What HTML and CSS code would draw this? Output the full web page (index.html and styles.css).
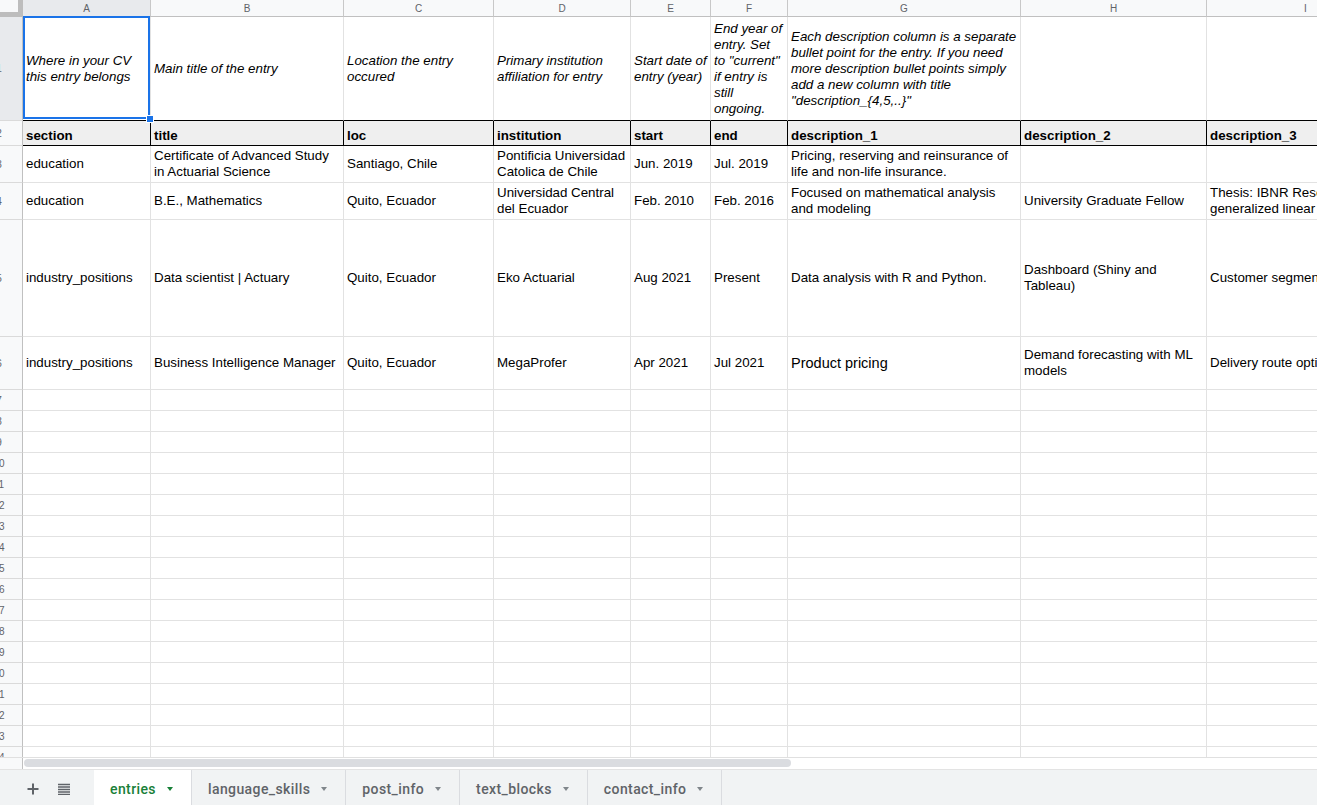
FILE: index.html
```html
<!DOCTYPE html>
<html lang="en">
<head>
<meta charset="utf-8">
<title>entries</title>
<link rel="stylesheet" href="styles.css">
</head>
<body>
<div class="sheet">
  <div class="viewport">
    <div class="grid">
      <div class="corner"></div>
      <div class="ch active">A</div>
      <div class="ch">B</div>
      <div class="ch">C</div>
      <div class="ch">D</div>
      <div class="ch">E</div>
      <div class="ch">F</div>
      <div class="ch">G</div>
      <div class="ch">H</div>
      <div class="ch">I</div>

      <div class="rh active">1</div>
      <div class="c note sel">Where in your CV this entry belongs<span class="handle"></span></div>
      <div class="c note">Main title of the entry</div>
      <div class="c note">Location the entry occured</div>
      <div class="c note">Primary institution affiliation for entry</div>
      <div class="c note">Start date of entry (year)</div>
      <div class="c note">End year of entry. Set to "current" if entry is still ongoing.</div>
      <div class="c note">Each description column is a separate bullet point for the entry. If you need more description bullet points simply add a new column with title "description_{4,5,..}"</div>
      <div class="c note"></div>
      <div class="c note"></div>

      <div class="rh">2</div>
      <div class="c fld">section</div>
      <div class="c fld">title</div>
      <div class="c fld">loc</div>
      <div class="c fld">institution</div>
      <div class="c fld">start</div>
      <div class="c fld">end</div>
      <div class="c fld">description_1</div>
      <div class="c fld">description_2</div>
      <div class="c fld">description_3</div>

      <div class="rh">3</div>
      <div class="c">education</div>
      <div class="c">Certificate of Advanced Study in Actuarial Science</div>
      <div class="c">Santiago, Chile</div>
      <div class="c">Pontificia Universidad Catolica de Chile</div>
      <div class="c">Jun. 2019</div>
      <div class="c">Jul. 2019</div>
      <div class="c">Pricing, reserving and reinsurance of life and non-life insurance.</div>
      <div class="c"></div>
      <div class="c"></div>

      <div class="rh">4</div>
      <div class="c">education</div>
      <div class="c">B.E., Mathematics</div>
      <div class="c">Quito, Ecuador</div>
      <div class="c">Universidad Central del Ecuador</div>
      <div class="c">Feb. 2010</div>
      <div class="c">Feb. 2016</div>
      <div class="c">Focused on mathematical analysis and modeling</div>
      <div class="c">University Graduate Fellow</div>
      <div class="c">Thesis: IBNR Reserving with generalized linear models</div>

      <div class="rh">5</div>
      <div class="c">industry_positions</div>
      <div class="c">Data scientist | Actuary</div>
      <div class="c">Quito, Ecuador</div>
      <div class="c">Eko Actuarial</div>
      <div class="c">Aug 2021</div>
      <div class="c">Present</div>
      <div class="c">Data analysis with R and Python.</div>
      <div class="c">Dashboard (Shiny and Tableau)</div>
      <div class="c">Customer segmentation</div>

      <div class="rh">6</div>
      <div class="c">industry_positions</div>
      <div class="c">Business Intelligence Manager</div>
      <div class="c">Quito, Ecuador</div>
      <div class="c">MegaProfer</div>
      <div class="c">Apr 2021</div>
      <div class="c">Jul 2021</div>
      <div class="c big">Product pricing</div>
      <div class="c">Demand forecasting with ML models</div>
      <div class="c">Delivery route optimization</div>

      <div class="rh">7</div><div class="c"></div><div class="c"></div><div class="c"></div><div class="c"></div><div class="c"></div><div class="c"></div><div class="c"></div><div class="c"></div><div class="c"></div>
      <div class="rh">8</div><div class="c"></div><div class="c"></div><div class="c"></div><div class="c"></div><div class="c"></div><div class="c"></div><div class="c"></div><div class="c"></div><div class="c"></div>
      <div class="rh">9</div><div class="c"></div><div class="c"></div><div class="c"></div><div class="c"></div><div class="c"></div><div class="c"></div><div class="c"></div><div class="c"></div><div class="c"></div>
      <div class="rh">10</div><div class="c"></div><div class="c"></div><div class="c"></div><div class="c"></div><div class="c"></div><div class="c"></div><div class="c"></div><div class="c"></div><div class="c"></div>
      <div class="rh">11</div><div class="c"></div><div class="c"></div><div class="c"></div><div class="c"></div><div class="c"></div><div class="c"></div><div class="c"></div><div class="c"></div><div class="c"></div>
      <div class="rh">12</div><div class="c"></div><div class="c"></div><div class="c"></div><div class="c"></div><div class="c"></div><div class="c"></div><div class="c"></div><div class="c"></div><div class="c"></div>
      <div class="rh">13</div><div class="c"></div><div class="c"></div><div class="c"></div><div class="c"></div><div class="c"></div><div class="c"></div><div class="c"></div><div class="c"></div><div class="c"></div>
      <div class="rh">14</div><div class="c"></div><div class="c"></div><div class="c"></div><div class="c"></div><div class="c"></div><div class="c"></div><div class="c"></div><div class="c"></div><div class="c"></div>
      <div class="rh">15</div><div class="c"></div><div class="c"></div><div class="c"></div><div class="c"></div><div class="c"></div><div class="c"></div><div class="c"></div><div class="c"></div><div class="c"></div>
      <div class="rh">16</div><div class="c"></div><div class="c"></div><div class="c"></div><div class="c"></div><div class="c"></div><div class="c"></div><div class="c"></div><div class="c"></div><div class="c"></div>
      <div class="rh">17</div><div class="c"></div><div class="c"></div><div class="c"></div><div class="c"></div><div class="c"></div><div class="c"></div><div class="c"></div><div class="c"></div><div class="c"></div>
      <div class="rh">18</div><div class="c"></div><div class="c"></div><div class="c"></div><div class="c"></div><div class="c"></div><div class="c"></div><div class="c"></div><div class="c"></div><div class="c"></div>
      <div class="rh">19</div><div class="c"></div><div class="c"></div><div class="c"></div><div class="c"></div><div class="c"></div><div class="c"></div><div class="c"></div><div class="c"></div><div class="c"></div>
      <div class="rh">20</div><div class="c"></div><div class="c"></div><div class="c"></div><div class="c"></div><div class="c"></div><div class="c"></div><div class="c"></div><div class="c"></div><div class="c"></div>
      <div class="rh">21</div><div class="c"></div><div class="c"></div><div class="c"></div><div class="c"></div><div class="c"></div><div class="c"></div><div class="c"></div><div class="c"></div><div class="c"></div>
      <div class="rh">22</div><div class="c"></div><div class="c"></div><div class="c"></div><div class="c"></div><div class="c"></div><div class="c"></div><div class="c"></div><div class="c"></div><div class="c"></div>
      <div class="rh">23</div><div class="c"></div><div class="c"></div><div class="c"></div><div class="c"></div><div class="c"></div><div class="c"></div><div class="c"></div><div class="c"></div><div class="c"></div>
      <div class="rh">24</div><div class="c"></div><div class="c"></div><div class="c"></div><div class="c"></div><div class="c"></div><div class="c"></div><div class="c"></div><div class="c"></div><div class="c"></div>
    </div>
  </div>

  <div class="hscroll">
    <div class="stub"></div>
    <div class="thumb"></div>
  </div>

  <div class="tabbar">
    <div class="tools">
      <svg class="icon" width="12" height="12" viewBox="0 0 12 12" aria-label="Add sheet">
        <path d="M6 0.5v11M0.5 6h11" stroke="#5f6368" stroke-width="2" fill="none"/>
      </svg>
      <svg class="icon" width="12" height="12" viewBox="0 0 12 12" aria-label="All sheets">
        <path d="M0 1.5h12M0 4h12M0 6.5h12M0 9h12M0 11.5h12" stroke="#5f6368" stroke-width="1.4" fill="none"/>
      </svg>
    </div>
    <div class="tab on">entries<span class="caret"></span></div>
    <div class="tab">language_skills<span class="caret"></span></div>
    <div class="tab">post_info<span class="caret"></span></div>
    <div class="tab">text_blocks<span class="caret"></span></div>
    <div class="tab">contact_info<span class="caret"></span></div>
  </div>
</div>
</body>
</html>
```

FILE: styles.css
```css
* {
  box-sizing: border-box;
}

html,
body {
  margin: 0;
  padding: 0;
}

body {
  width: 1317px;
  height: 805px;
  overflow: hidden;
  background: #fff;
  font-family: "Liberation Sans", Arial, sans-serif;
}

.sheet {
  display: flex;
  flex-direction: column;
  height: 805px;
}

/* ---------- grid ---------- */

.viewport {
  flex: none;
  height: 757px;
  overflow: hidden;
}

.grid {
  display: grid;
  width: max-content;
  margin-left: -24px; /* row header scrolled partly out of view */
  grid-template-columns: 47px 128px 193px 150px 137px 80px 77px 233px 186px 198px;
  grid-template-rows: 17px 104px 25px 37px 37px 117px 53px;
  grid-auto-rows: 21px;
}

.corner {
  background: #f8f9fa;
  border-right: 5px solid #bdbdbd;
  border-bottom: 5px solid #bdbdbd;
}

.ch,
.rh {
  display: flex;
  align-items: center;
  justify-content: center;
  background: #f8f9fa;
  color: #5f6368;
  font-size: 10px;
}

.ch {
  border-right: 1px solid #c8c8c8;
  border-bottom: 1px solid #c0c0c0;
}

.rh {
  border-right: 1px solid #c0c0c0;
  border-bottom: 1px solid #dadada;
}

.ch.active,
.rh.active {
  background: #e8eaed;
}

.c {
  display: flex;
  align-items: center;
  padding: 0 3px;
  border-right: 1px solid #e2e2e2;
  border-bottom: 1px solid #e2e2e2;
  color: #000;
  font-size: 13.33px;
  line-height: 16px;
}

.c.note {
  font-style: italic;
  border-bottom-color: #000;
}

.c.fld {
  align-items: flex-end;
  padding-bottom: 1px;
  background: #efefef;
  font-weight: bold;
  border-right-color: #000;
  border-bottom-color: #000;
}

.c.big {
  font-size: 14.5px;
}

/* active cell */
.c.sel {
  position: relative;
}

.c.sel::after {
  content: "";
  position: absolute;
  top: -1px;
  left: 0;
  right: 0;
  bottom: 1px;
  border: 2px solid #1a73e8;
  pointer-events: none;
}

.handle {
  position: absolute;
  right: -4px;
  bottom: -3px;
  width: 8px;
  height: 8px;
  background: #1a73e8;
  border: 1px solid #fff;
  z-index: 2;
}

/* ---------- horizontal scrollbar ---------- */

.hscroll {
  flex: none;
  display: flex;
  height: 12px;
  background: #fff;
  border-top: 1px solid #e0e0e0;
}

.hscroll .stub {
  width: 23px;
  background: #f8f9fa;
  border-right: 1px solid #c0c0c0;
}

.thumb {
  width: 767px;
  height: 8px;
  margin: 1px 0 0 1px;
  background: #dadce0;
  border-radius: 4px;
}

/* ---------- sheet tabs ---------- */

.tabbar {
  flex: none;
  display: flex;
  height: 36px;
  background: #f1f3f4;
  border-top: 1px solid #e3e3e3;
  font-family: Roboto, "Liberation Sans", sans-serif;
}

.tools {
  width: 94px;
  display: flex;
  align-items: center;
  gap: 19px;
  padding: 2px 0 0 27px;
}

.icon {
  display: block;
}

.tab {
  display: flex;
  align-items: center;
  gap: 11px;
  padding: 2px 18px 0 16px;
  font-size: 14px;
  font-weight: 500;
  letter-spacing: 0.4px;
  color: #5f6368;
  border-right: 1px solid #dadce0;
}

.tab.on {
  background: #fff;
  color: #188038;
}

.caret {
  width: 0;
  height: 0;
  border-left: 3.5px solid transparent;
  border-right: 3.5px solid transparent;
  border-top: 4px solid #80868b;
}

.tab.on .caret {
  border-top-color: #188038;
}
```
